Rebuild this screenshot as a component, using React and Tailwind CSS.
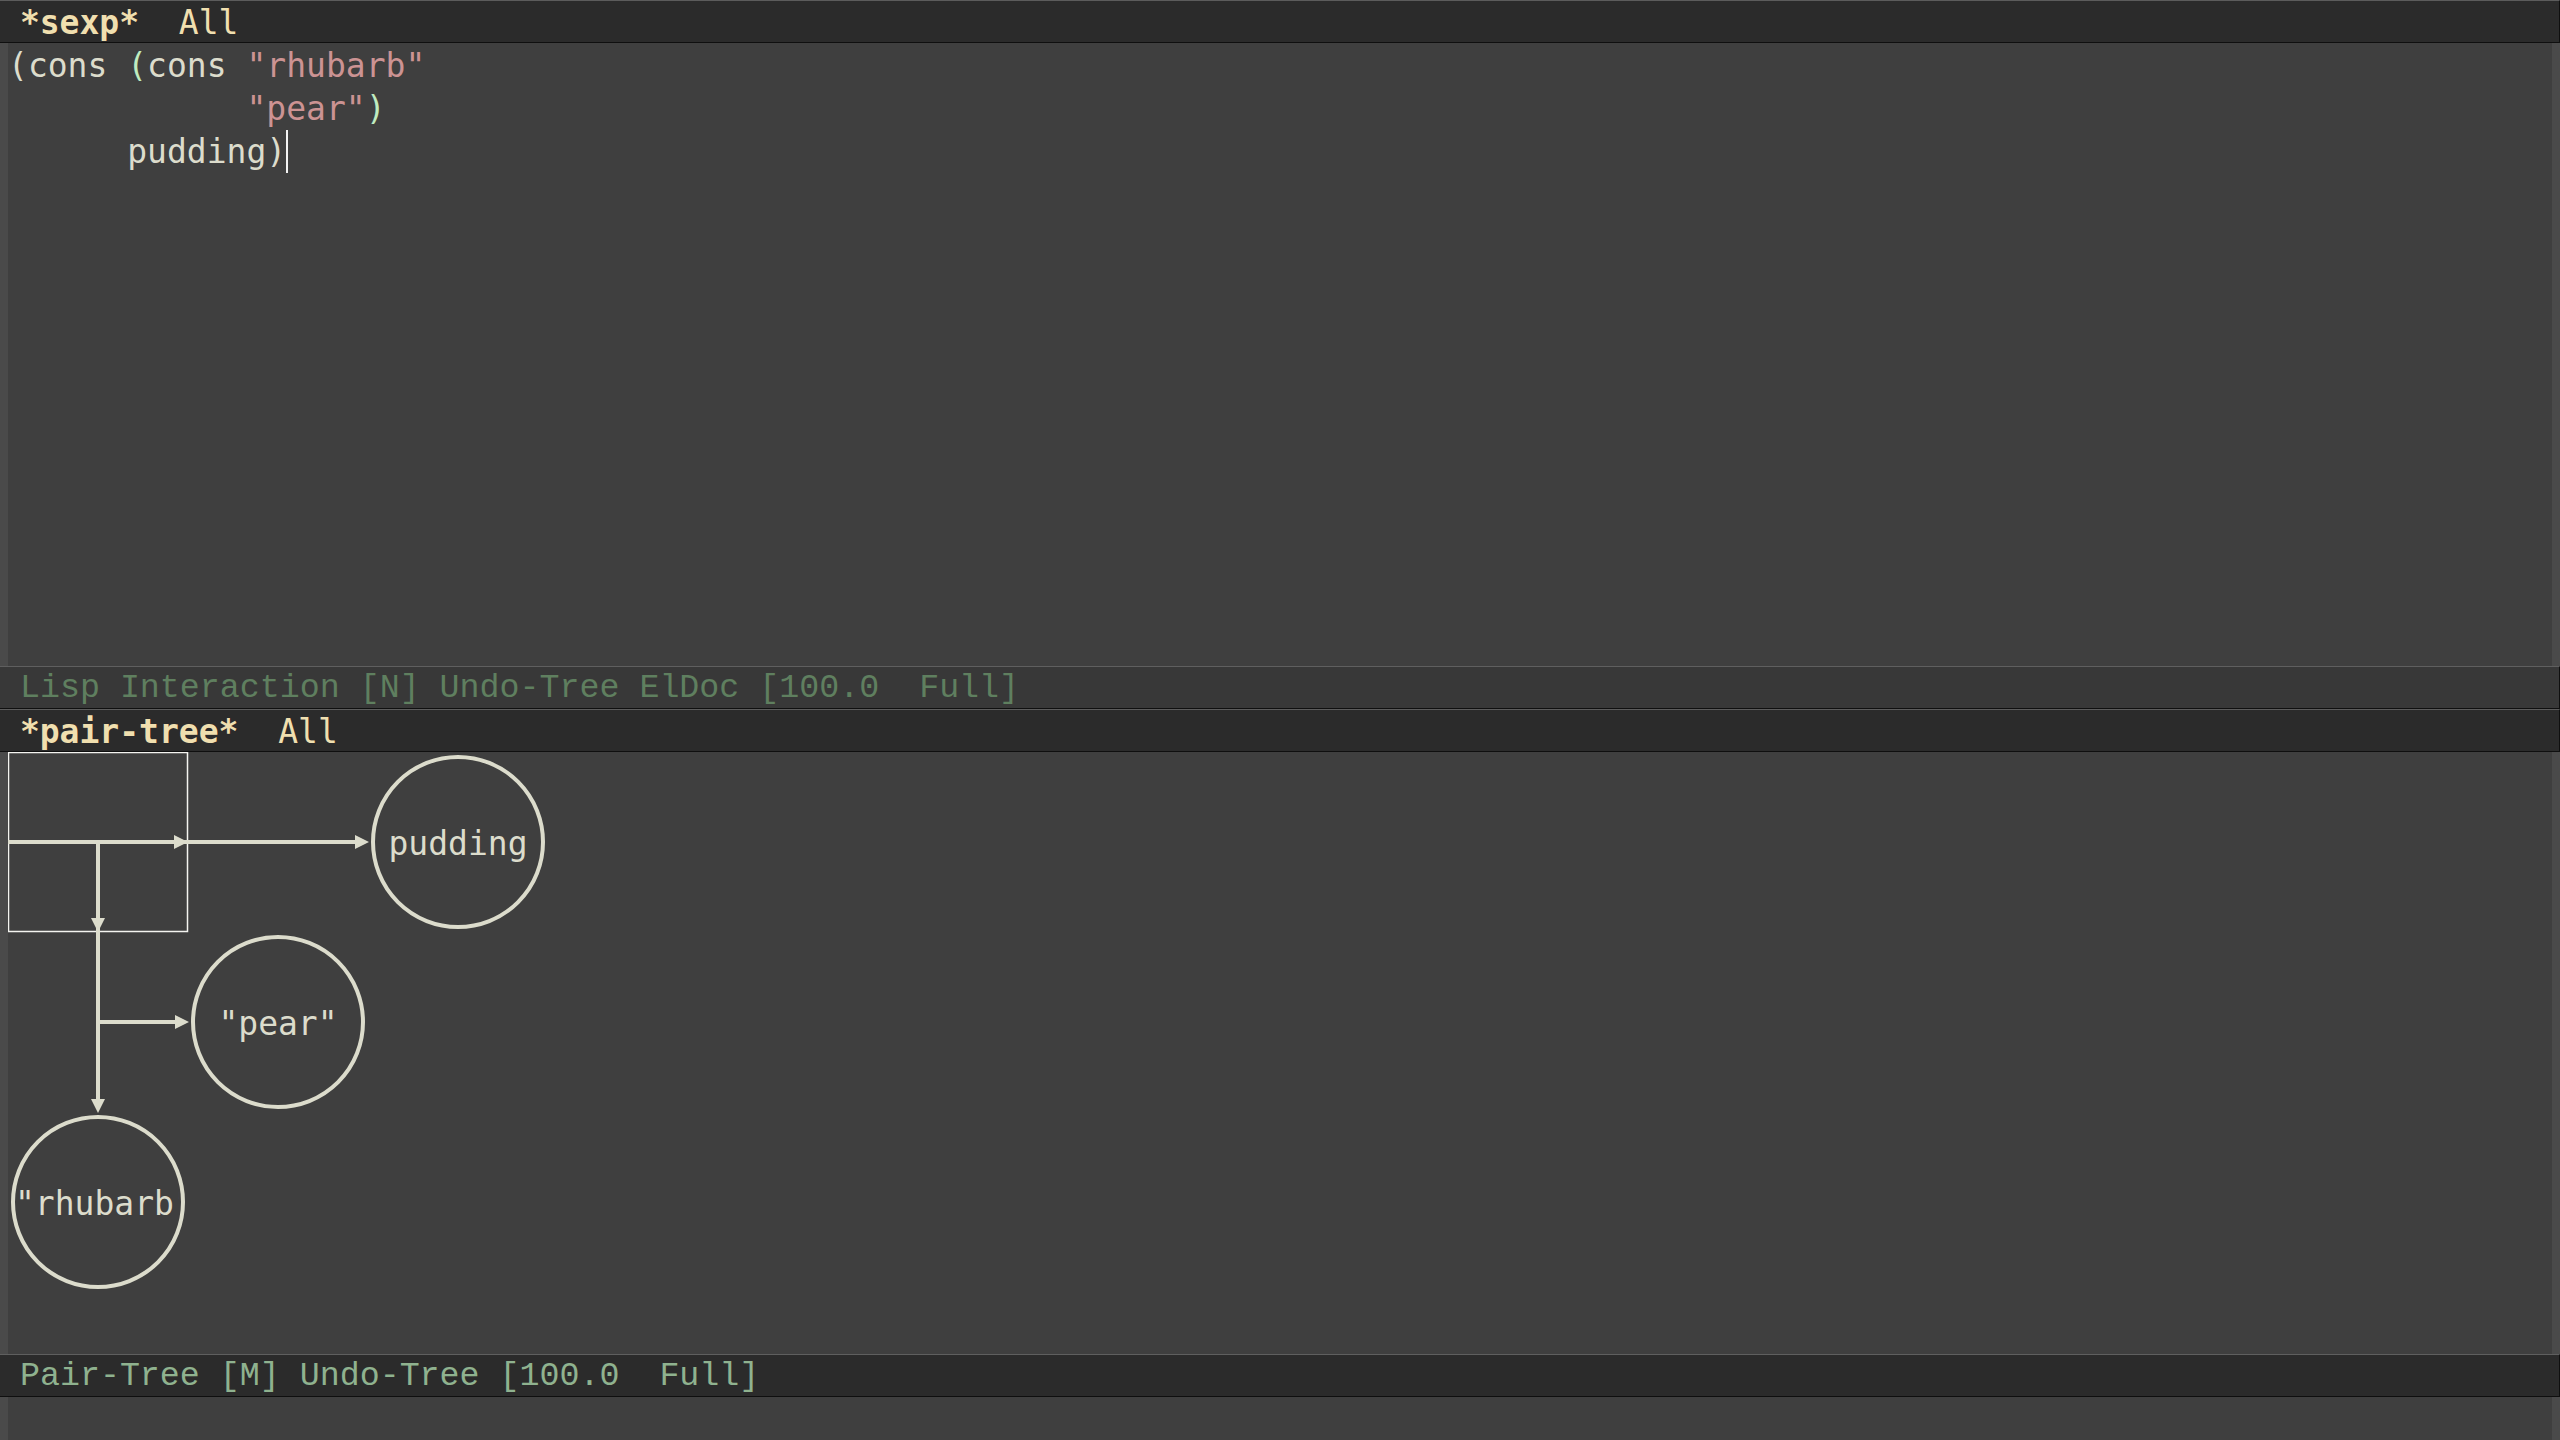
import React from "react";

const CODE = "font-['DejaVu_Sans_Mono',monospace]";
const MODE = "font-['Liberation_Mono',monospace]";

function HeaderLine({ name }) {
  return (
    <div className={`h-[43px] shrink-0 overflow-hidden bg-[#2b2b2b] border-t border-t-[#5c5c5c] border-b border-b-[#0f0f0f] border-r border-r-[#0f0f0f] ${CODE} text-[33px] leading-[43px] whitespace-pre text-[#f0dfaf]`}>
      {" "}
      <span className="font-bold">{name}</span>
      {"  All"}
    </div>
  );
}

function ModeLine({ text, active }) {
  return (
    <div
      className={`h-[43px] shrink-0 overflow-hidden border-t border-t-[#5f5f5f] border-b border-b-[#0f0f0f] border-r border-r-[#0f0f0f] ${MODE} text-[33.3px] leading-[43px] whitespace-pre ${
        active ? "bg-[#2b2b2b] text-[#8fb28f]" : "bg-[#383838] text-[#5f7f5f]"
      }`}
    >
      {" " + text}
    </div>
  );
}

function Fringe() {
  return <div className="w-[8px] shrink-0 bg-[#4a4a4a]" />;
}

function Arrow({ x, y, dir }) {
  let pts;
  if (dir === "right") pts = `${x},${y} ${x - 14},${y - 7} ${x - 14},${y + 7}`;
  else pts = `${x},${y} ${x - 7},${y - 14} ${x + 7},${y - 14}`;
  return <polygon points={pts} fill="#dcdccc" />;
}

function Tree() {
  const stroke = "#dcdccc";
  return (
    <svg width="560" height="560" viewBox="0 0 560 560" className="block">
      <defs>
        <clipPath id="clipRhubarb">
          <circle cx="90" cy="450" r="81" />
        </clipPath>
      </defs>
      <rect x="0.5" y="0.5" width="179" height="179" fill="none" stroke="#f4f4f0" strokeWidth="1.5" />
      <line x1="0" y1="90" x2="352" y2="90" stroke={stroke} strokeWidth="4" />
      <Arrow x={180} y={90} dir="right" />
      <Arrow x={361} y={90} dir="right" />
      <line x1="90" y1="90" x2="90" y2="352" stroke={stroke} strokeWidth="4" />
      <Arrow x={90} y={180} dir="down" />
      <Arrow x={90} y={361} dir="down" />
      <line x1="90" y1="270" x2="172" y2="270" stroke={stroke} strokeWidth="4" />
      <Arrow x={181} y={270} dir="right" />
      <circle cx="450" cy="90" r="85" fill="none" stroke={stroke} strokeWidth="4" />
      <circle cx="270" cy="270" r="85" fill="none" stroke={stroke} strokeWidth="4" />
      <circle cx="90" cy="450" r="85" fill="none" stroke={stroke} strokeWidth="4" />
      <g fill="#dcdccc" fontFamily="'DejaVu Sans Mono', monospace" fontSize="33">
        <text x="450" y="103" textAnchor="middle">pudding</text>
        <text x="270" y="283" textAnchor="middle">"pear"</text>
        <text x="7" y="463" clipPath="url(#clipRhubarb)">"rhubarb"</text>
      </g>
    </svg>
  );
}

export default function App() {
  const d1 = "text-[#dcdccc]";
  const d2 = "text-[#bfebbf]";
  const str = "text-[#cc9393]";
  return (
    <div className="w-[2560px] h-[1440px] bg-[#3f3f3f] flex flex-col overflow-hidden">
      <HeaderLine name="*sexp*" />
      <div className="h-[623px] shrink-0 flex">
        <Fringe />
        <div className={`flex-1 pt-[1px] ${CODE} text-[33px] leading-[43px] whitespace-pre text-[#dcdccc]`}>
          <div>
            <span className={d1}>(</span>cons <span className={d2}>(</span>cons <span className={str}>"rhubarb"</span>
          </div>
          <div>
            {"            "}
            <span className={str}>"pear"</span>
            <span className={d2}>)</span>
          </div>
          <div className="flex items-start">
            <span>{"      pudding"}</span>
            <span className={d1}>)</span>
            <span className="inline-block w-[2px] h-[43px] bg-[#f2f2f2]" />
          </div>
        </div>
        <Fringe />
      </div>
      <ModeLine text="Lisp Interaction [N] Undo-Tree ElDoc [100.0  Full]" />
      <HeaderLine name="*pair-tree*" />
      <div className="h-[602px] shrink-0 flex">
        <Fringe />
        <div className="flex-1 overflow-hidden">
          <Tree />
        </div>
        <Fringe />
      </div>
      <ModeLine text="Pair-Tree [M] Undo-Tree [100.0  Full]" active />
      <div className="flex-1 flex">
        <Fringe />
        <div className="flex-1" />
        <Fringe />
      </div>
    </div>
  );
}
